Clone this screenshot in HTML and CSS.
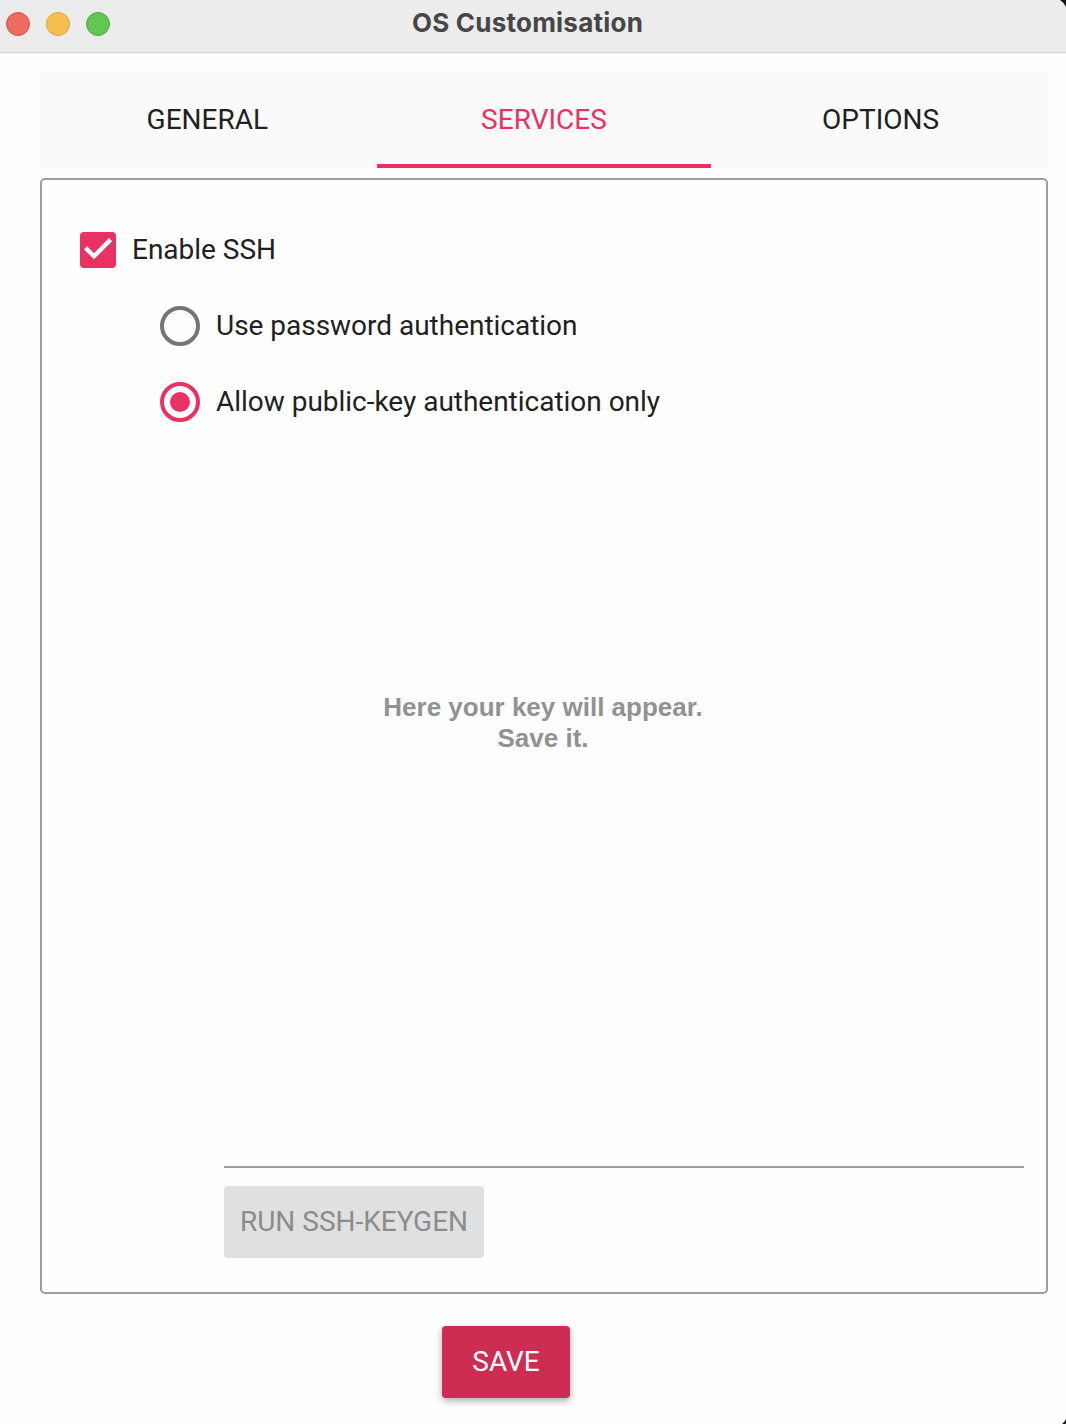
FILE: index.html
```html
<!DOCTYPE html>
<html lang="en">
<head>
<meta charset="utf-8">
<title>OS Customisation</title>
<link rel="stylesheet" href="styles.css">
</head>
<body>
<div class="window">
  <header class="titlebar">
    <div class="lights">
      <span class="light close"></span>
      <span class="light minimise"></span>
      <span class="light maximise"></span>
    </div>
    <h1 class="title">OS Customisation</h1>
  </header>
  <main class="content">
    <nav class="tabs">
      <a class="tab">GENERAL</a>
      <a class="tab active">SERVICES</a>
      <a class="tab">OPTIONS</a>
    </nav>
    <section class="panel">
      <label class="option">
        <svg class="checkbox" viewBox="0 0 36 36">
          <rect width="36" height="36" rx="4" fill="#ea3164"/>
          <path d="M5.6 15.9 L14 24.2 L30.6 7.6" fill="none" stroke="#fff" stroke-width="4.4"/>
        </svg>
        <span>Enable SSH</span>
      </label>
      <label class="option nested">
        <span class="radio"></span>
        <span>Use password authentication</span>
      </label>
      <label class="option nested">
        <span class="radio selected"></span>
        <span>Allow public-key authentication only</span>
      </label>
      <div class="keys">
        <p class="placeholder"><span>Here your key will appear.</span><span>Save it.</span></p>
      </div>
      <button class="button keygen" disabled>RUN SSH-KEYGEN</button>
    </section>
    <button class="button save">SAVE</button>
  </main>
  <svg class="corner top" viewBox="0 0 6 7"><path d="M0 0 H6 V7 Q4 2.5 0 0Z" fill="#151515"/></svg>
  <svg class="corner bottom" viewBox="0 0 4 5"><path d="M4 0 V5 H0 Q2.5 3 4 0Z" fill="#24211d"/></svg>
</div>
</body>
</html>
```
FILE: styles.css
```css
* {
  box-sizing: border-box;
}

body {
  margin: 0;
  background: #fff;
  color: #212121;
  font: 28px/36px Roboto, sans-serif;
}

.window {
  position: relative;
  display: flex;
  flex-direction: column;
  height: 1424px;
  background: #fefefe;
  overflow: hidden;
}

.titlebar {
  display: grid;
  grid-template-columns: 110px 1fr 127px;
  height: 54px;
  padding: 0 0 0 6px;
  background: #ececec;
  border-bottom: 1px solid #f0f0f0;
  box-shadow: inset 0 -1px #d2d2d2;
}

.lights {
  display: flex;
  gap: 16px;
  padding-top: 12px;
}

.light {
  width: 24px;
  height: 24px;
  border: 1px solid;
  border-radius: 50%;
}

.close {
  background: #ed6b60;
  border-color: #d65449;
}

.minimise {
  background: #f5bf4f;
  border-color: #d9a23c;
}

.maximise {
  background: #62c655;
  border-color: #50ab40;
}

.title {
  margin: 0;
  padding-top: 5px;
  font: 700 26px/36px Inter, sans-serif;
  letter-spacing: 0.23px;
  color: #464646;
  text-align: center;
}

.content {
  display: flex;
  flex: 1;
  flex-direction: column;
  padding: 18px 18px 26px 40px;
}

.tabs {
  display: grid;
  grid-template-columns: repeat(3, 1fr);
  gap: 2px;
  height: 96px;
  margin-bottom: 10px;
  background: #fafafa;
}

.tab {
  padding-top: 30px;
  border-bottom: 4px solid transparent;
  text-align: center;
}

.tab.active {
  color: #ea3164;
  border-color: #ea3164;
}

.panel {
  display: flex;
  flex: 1;
  flex-direction: column;
  margin-bottom: 32px;
  padding: 50px 22px 34px 38px;
  border: 2px solid #9e9e9e;
  border-radius: 5px;
}

.option {
  display: flex;
  align-items: center;
  gap: 16px;
  height: 40px;
  margin-bottom: 36px;
  letter-spacing: -0.02px;
}

.nested {
  padding-left: 80px;
}

.checkbox {
  width: 36px;
  height: 36px;
}

.radio {
  display: grid;
  place-items: center;
  width: 40px;
  height: 40px;
  border: 4px solid #757575;
  border-radius: 50%;
}

.radio.selected {
  border-color: #ea3164;
}

.selected::after {
  content: "";
  width: 20px;
  height: 20px;
  border-radius: 50%;
  background: #ea3164;
}

.keys {
  flex: 1;
  margin: 0 0 18px 144px;
  padding-top: 234px;
  border-bottom: 2px solid #9e9e9e;
}

.placeholder {
  display: flex;
  flex-direction: column;
  width: 638px;
  margin: 0;
  font: 700 26px/31px "Liberation Sans", sans-serif;
  color: #929292;
  text-align: center;
}

.button {
  height: 72px;
  padding: 0;
  border: 0;
  border-radius: 4px;
  font: inherit;
}

.keygen {
  width: 260px;
  margin-left: 144px;
  background: #e0e0e0;
  color: #8c8c8c;
}

.save {
  width: 128px;
  margin-left: 402px;
  background: #cd2c53;
  color: #fff;
  box-shadow: 0 3px 7px rgb(0 0 0 / 32%);
}

.corner {
  position: absolute;
  right: 0;
}

.corner.top {
  top: 0;
  width: 6px;
  height: 7px;
}

.corner.bottom {
  bottom: 0;
  width: 4px;
  height: 5px;
}
```
